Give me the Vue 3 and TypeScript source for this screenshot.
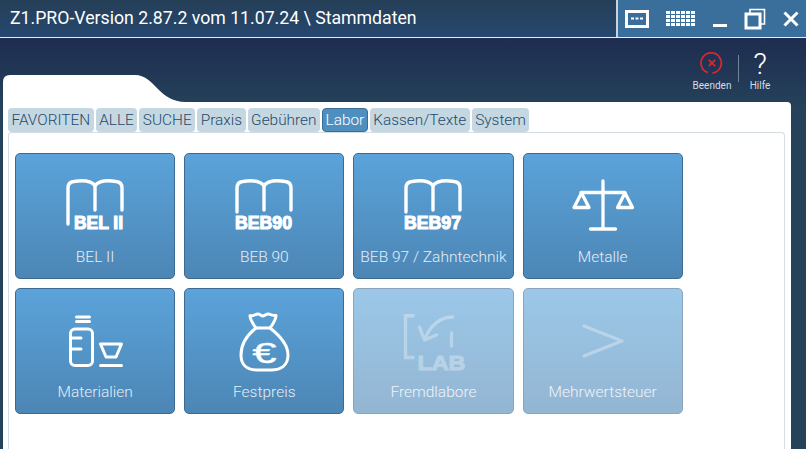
<template>
  <div class="app">
    <header class="titlebar">
      <div class="title">Z1.PRO-Version 2.87.2 vom 11.07.24 \ Stammdaten</div>
      <div class="window-controls">
        <svg class="ctl" width="24" height="18" viewBox="0 0 24 18">
          <rect x="1.5" y="1.5" width="21" height="15" fill="none" stroke="#fff" stroke-width="3" />
          <rect x="6" y="7.5" width="3" height="2" fill="#fff" />
          <rect x="10.5" y="7.5" width="3" height="2" fill="#fff" />
          <rect x="15" y="7.5" width="3" height="2" fill="#fff" />
        </svg>
        <svg class="ctl" width="30" height="16" viewBox="0 0 30 16">
          <g fill="#fff">
            <template v-for="row in 4" :key="row">
              <rect
                v-for="col in 6"
                :key="col"
                :x="(col - 1) * 5"
                :y="(row - 1) * 4"
                width="4"
                height="3"
              />
            </template>
          </g>
        </svg>
        <svg class="ctl" width="14" height="18" viewBox="0 0 14 18">
          <rect x="0" y="14" width="14" height="3" fill="#fff" />
        </svg>
        <svg class="ctl" width="22" height="22" viewBox="0 0 22 22">
          <path d="M6 5V1.5H20.5V16H17" fill="none" stroke="#fff" stroke-width="1.6" />
          <rect x="2" y="6" width="14" height="14" fill="none" stroke="#fff" stroke-width="3" />
        </svg>
        <svg class="ctl" width="16" height="16" viewBox="0 0 16 16">
          <path d="M1.5 1.5L14.5 14.5M14.5 1.5L1.5 14.5" stroke="#fff" stroke-width="3" />
        </svg>
      </div>
    </header>

    <main class="workspace">
      <div class="top-row">
        <svg class="panel-tab" width="183" height="27" viewBox="0 0 183 27">
          <path d="M0 27V7Q0 0 7 0H132C152 0 155 27 183 27Z" fill="#fff" />
        </svg>
        <div class="actions">
          <button class="action">
            <svg class="quit-icon" width="24" height="24" viewBox="0 0 26 26">
              <path
                d="M8.5 23.5A11 11 0 1 1 13.5 24"
                fill="none"
                stroke="#d8282f"
                stroke-width="1.9"
              />
              <path d="M9.5 9.5L16.5 16.5M16.5 9.5L9.5 16.5" stroke="#d8282f" stroke-width="1.9" />
            </svg>
            <span>Beenden</span>
          </button>
          <div class="divider"></div>
          <button class="action help">
            <svg class="help-icon" width="26" height="36" viewBox="0 0 26 36">
              <text x="13" y="29" class="help-mark">?</text>
            </svg>
            <span>Hilfe</span>
          </button>
        </div>
      </div>

      <section class="panel">
        <nav class="tabs">
          <div
            v-for="tab in tabs"
            :key="tab"
            class="tab"
            :class="{ active: tab === activeTab }"
          >{{ tab }}</div>
        </nav>

        <div class="tab-body">
          <div class="grid">
            <button
              v-for="tile in tiles"
              :key="tile.label"
              class="tile"
              :class="{ disabled: tile.disabled }"
            >
              <svg class="tile-icon" width="64" height="62" viewBox="0 0 64 62">
                <g
                  v-if="tile.icon === 'book'"
                  fill="none"
                  stroke="#fff"
                  stroke-width="3.4"
                  stroke-linecap="round"
                >
                  <path
                    :d="`M5 ${tile.code === 'BEL II' ? 47 : 35}V11Q5 5 11 4.5C20 3 28 4 32 8.5C36 4 44 3 53 4.5Q59 5 59 11V33`"
                  />
                  <path d="M32 8.5V33" />
                  <text
                    :x="tile.code === 'BEL II' ? 11 : 3"
                    y="52"
                    class="icon-code"
                    :textLength="tile.code === 'BEL II' ? 49 : 57"
                    lengthAdjust="spacingAndGlyphs"
                  >{{ tile.code }}</text>
                </g>

                <g
                  v-else-if="tile.icon === 'scale'"
                  fill="none"
                  stroke="#fff"
                  stroke-width="3.3"
                  stroke-linecap="round"
                  stroke-linejoin="round"
                >
                  <path d="M32 4V52M19.5 52H44.5M10 15.5H54" />
                  <path d="M10.5 16L3 30.5H18Z" />
                  <path d="M54 16L46.5 30.5H61.5Z" />
                </g>

                <g
                  v-else-if="tile.icon === 'bottle'"
                  fill="none"
                  stroke="#fff"
                  stroke-width="3"
                  stroke-linecap="round"
                  stroke-linejoin="round"
                >
                  <path d="M13.5 5H26.5M13.5 9.5H26.5" />
                  <rect x="7.5" y="17" width="22" height="36.5" rx="4.5" />
                  <path d="M8 26H18M8 37H18" />
                  <path d="M37.5 32H58.5L53 45H43Z" />
                  <path d="M37.5 53.5H58.5" />
                </g>

                <g
                  v-else-if="tile.icon === 'bag'"
                  fill="none"
                  stroke="#fff"
                  stroke-width="3"
                  stroke-linecap="round"
                  stroke-linejoin="round"
                >
                  <path d="M24 16C21 12 18 8 18 3.5C21 5 23 2 26 2C28 2 29 4 31 4C33 4 34 1.5 37 2C39 3 41 4 44 3.5C44 8 41 12 38 16Z" />
                  <path d="M24 16C15 23 9 33 9 43C9 53 15 58 25 58H39C49 58 56 53 56 43C56 33 47 23 38 16" />
                  <text x="20.5" y="50.5" class="icon-euro" textLength="24" lengthAdjust="spacingAndGlyphs">€</text>
                </g>

                <g
                  v-else-if="tile.icon === 'lab'"
                  fill="none"
                  stroke="#fff"
                  stroke-width="3.4"
                  stroke-linecap="round"
                  stroke-linejoin="round"
                >
                  <path d="M13.5 3.7H4.5V45.5H13.5" stroke-linecap="butt" stroke-linejoin="miter" />
                  <path d="M51.5 5C40 5 29 13 24 27" />
                  <path d="M18.5 15L23.5 28L35.5 23" />
                  <path d="M50.5 21V34" />
                  <text x="16.5" y="58" class="icon-lab" textLength="48" lengthAdjust="spacingAndGlyphs">LAB</text>
                </g>

                <path
                  v-else
                  d="M13 14L51 29L13 44"
                  fill="none"
                  stroke="#fff"
                  stroke-width="3.4"
                  stroke-linecap="round"
                  stroke-linejoin="round"
                />
              </svg>
              <span class="tile-label">{{ tile.label }}</span>
            </button>
          </div>
        </div>
      </section>
    </main>
  </div>
</template>

<script setup lang="ts">
interface Tile {
  label: string;
  icon: "book" | "scale" | "bottle" | "bag" | "lab" | "chevron";
  code?: string;
  disabled?: boolean;
}

const tabs: string[] = [
  "FAVORITEN",
  "ALLE",
  "SUCHE",
  "Praxis",
  "Gebühren",
  "Labor",
  "Kassen/Texte",
  "System",
];
const activeTab = "Labor";

const tiles: Tile[] = [
  { label: "BEL II", icon: "book", code: "BEL II" },
  { label: "BEB 90", icon: "book", code: "BEB90" },
  { label: "BEB 97 / Zahntechnik", icon: "book", code: "BEB97" },
  { label: "Metalle", icon: "scale" },
  { label: "Materialien", icon: "bottle" },
  { label: "Festpreis", icon: "bag" },
  { label: "Fremdlabore", icon: "lab", disabled: true },
  { label: "Mehrwertsteuer", icon: "chevron", disabled: true },
];
</script>

<style>
html,
body {
  margin: 0;
  overflow: hidden;
}
</style>

<style scoped>
.app {
  width: 806px;
  height: 449px;
  overflow: hidden;
  display: flex;
  flex-direction: column;
  font-family: Roboto, "Liberation Sans", sans-serif;
  background: #23405a;
}

.titlebar {
  height: 37px;
  flex: none;
  display: flex;
  justify-content: space-between;
  border-bottom: 1px solid #e6edf3;
  background: linear-gradient(180deg, #253f57, #26476f);
}

.title {
  padding: 0 0 0 10px;
  line-height: 37px;
  font-size: 17.7px;
  color: #fff;
}

.window-controls {
  width: 190px;
  display: flex;
  align-items: center;
  justify-content: space-between;
  box-sizing: border-box;
  padding: 0 7px 0 7px;
  border-left: 2px solid #c9d3dc;
  background: #3b6f9b;
}

.ctl {
  display: block;
}

.workspace {
  flex: 1;
  display: flex;
  flex-direction: column;
  padding: 0 15px 0 3px;
  background: linear-gradient(180deg, #1e2c50 0, #25425a 70px);
}

.top-row {
  height: 64px;
  flex: none;
  display: flex;
  justify-content: space-between;
  align-items: flex-end;
}

.panel-tab {
  display: block;
}

.actions {
  align-self: flex-start;
  display: flex;
  align-items: flex-start;
  padding-top: 13px;
  margin-right: 16px;
}

.action {
  display: flex;
  flex-direction: column;
  align-items: center;
  padding: 0;
  border: 0;
  background: none;
  font: inherit;
  font-size: 10px;
  color: #d5dde4;
  width: 42px;
}

.quit-icon {
  display: block;
  margin-bottom: 5px;
}

.help-icon {
  display: block;
  margin: -6px 0 -1px;
}

.action span:last-child {
  line-height: 12px;
}

.divider {
  width: 1px;
  height: 27px;
  margin: 4px 6px 0 5px;
  background: #6f8698;
}

.action.help {
  width: 30px;
}

.help-mark {
  font-size: 30px;
  font-weight: 300;
  fill: #fff;
  text-anchor: middle;
}

.panel {
  flex: 1;
  display: flex;
  flex-direction: column;
  padding: 6px 6px 0 5px;
  background: #fff;
  border-top-right-radius: 4px;
}

.tabs {
  display: flex;
  gap: 2px;
  height: 24px;
  flex: none;
}

.tab {
  padding: 0 3.5px;
  line-height: 24px;
  font-size: 15.4px;
  font-weight: 300;
  color: #27496b;
  background: #c5d8e2;
  border-radius: 4px;
}

.tab.active {
  color: #fff;
  background: #4f8fc0;
  border: 1px solid #3a6d96;
  border-radius: 4px;
  line-height: 22px;
  padding: 0 2.5px;
  box-sizing: border-box;
}

.tab-body {
  flex: 1;
  border: 1px solid #d5dde2;
  border-bottom: 0;
  border-radius: 4px 4px 0 0;
  padding: 20px 6px 0 6px;
}

.grid {
  display: grid;
  grid-template-columns: repeat(4, 160.2px);
  grid-auto-rows: 126px;
  gap: 9px;
}

.tile {
  display: flex;
  flex-direction: column;
  align-items: center;
  box-sizing: border-box;
  padding: 23px 0 0;
  border: 1px solid #3d6a90;
  border-radius: 5px;
  background: linear-gradient(180deg, #5ba3da, #4c86b5);
  font: inherit;
  color: #e4eef6;
}

.tile.disabled {
  opacity: 0.6;
}

.tile.disabled .tile-icon {
  opacity: 0.32;
}

.tile-icon {
  display: block;
  flex: none;
  overflow: visible;
}

.tile-label {
  margin-top: 8px;
  font-size: 15.5px;
  font-weight: 300;
  line-height: 20px;
  white-space: nowrap;
}

.icon-code {
  font-family: "Liberation Sans", sans-serif;
  font-size: 18px;
  font-weight: 700;
  fill: #fff;
  stroke: #fff;
  stroke-width: 1.1;
}

.icon-lab {
  font-family: "Liberation Sans", sans-serif;
  font-size: 21px;
  font-weight: 700;
  fill: #fff;
  stroke: #fff;
  stroke-width: 1;
}

.icon-euro {
  font-family: "Liberation Sans", sans-serif;
  font-size: 29px;
  font-weight: 400;
  fill: #fff;
  stroke: #fff;
  stroke-width: 0.4;
}
</style>
